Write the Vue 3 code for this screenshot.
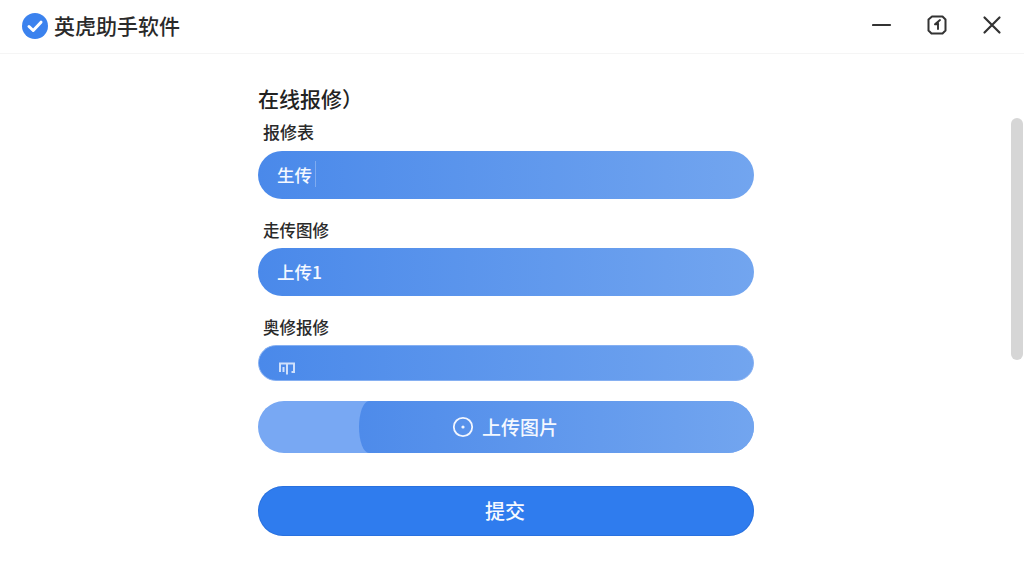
<template>
  <div class="window">
    <header class="titlebar">
      <div class="brand">
        <svg class="brand-icon" width="28" height="28" viewBox="0 0 28 28">
          <circle cx="14" cy="14" r="13" fill="#3b82ee" />
          <path d="M8 14.500l4.200 4L20 10.200" fill="none" stroke="#fff" stroke-width="3" stroke-linecap="round" stroke-linejoin="round" />
        </svg>
        <span class="brand-name">英虎助手软件</span>
      </div>
      <div class="win-controls">
        <button class="win-btn" aria-label="最小化">
          <svg width="20" height="20" viewBox="0 0 20 20">
            <path d="M1 10h17" stroke="#333" stroke-width="2.200" stroke-linecap="round" />
          </svg>
        </button>
        <button class="win-btn" aria-label="最大化">
          <svg width="20" height="20" viewBox="0 0 20 20" fill="none">
            <path d="M5 1.500h10.500l3 3v11l-3 3h-11l-3-3v-11z" stroke="#333" stroke-width="2" stroke-linejoin="round" />
            <path d="M13 5L8 9.300h3.200M11 7.500v6.500" stroke="#333" stroke-width="1.900" stroke-linecap="round" stroke-linejoin="round" />
          </svg>
        </button>
        <button class="win-btn" aria-label="关闭">
          <svg width="20" height="20" viewBox="0 0 20 20">
            <path d="M2.500 2.500l15 15M17.500 2.500l-15 15" stroke="#333" stroke-width="2.200" stroke-linecap="round" />
          </svg>
        </button>
      </div>
    </header>

    <main class="content">
      <form class="repair-form" @submit.prevent>
        <h1 class="form-title">在线报修）</h1>

        <label class="field-label first">报修表</label>
        <div class="field">
          <span>生传</span><i class="caret"></i>
        </div>

        <label class="field-label">走传图修</label>
        <div class="field">
          <span>上传1</span>
        </div>

        <label class="field-label">奥修报修</label>
        <div class="field small">
          <svg class="field-icon" width="18" height="14" viewBox="0 0 18 14" fill="none">
            <path d="M2 11V2.500h14V11h-2.500M9 2.500V13.500M5.500 6v5" stroke="#cfe0fb" stroke-width="2" />
          </svg>
        </div>

        <button type="button" class="upload-btn">
          <span class="upload-fill"></span>
          <svg class="upload-icon" width="22" height="22" viewBox="0 0 22 22" fill="none">
            <circle cx="11" cy="11" r="9.200" stroke="#f2f6fe" stroke-width="1.800" />
            <circle cx="11" cy="11" r="1.600" fill="#f2f6fe" />
          </svg>
          <span class="upload-text">上传图片</span>
        </button>

        <button type="submit" class="submit-btn">提交</button>
      </form>
    </main>

    <div class="scroll-thumb"></div>
  </div>
</template>

<script setup>
</script>

<style scoped>
.window {
  position: relative;
  width: 1024px;
  height: 576px;
  overflow: hidden;
  background: #fff;
  font-family: "Noto Sans CJK SC", "Noto Sans", sans-serif;
  color: #222;
}

.titlebar {
  display: flex;
  justify-content: space-between;
  align-items: center;
  height: 54px;
  box-sizing: border-box;
  padding: 0 22px 2px 21px;
  border-bottom: 1px solid #f5f5f5;
}

.brand {
  display: flex;
  align-items: center;
  gap: 5px;
}

.brand-name {
  margin-top: -2px;
  font-size: 21px;
  font-weight: 500;
  line-height: 28px;
  color: #2a2a2a;
}

.win-controls {
  display: flex;
  gap: 35px;
  margin-top: -1px;
}

.win-btn {
  display: flex;
  width: 20px;
  height: 20px;
  padding: 0;
  border: none;
  background: none;
}

.content {
  display: flex;
  justify-content: center;
  padding-right: 12px;
}

.repair-form {
  display: flex;
  flex-direction: column;
  width: 496px;
  padding-top: 28px;
}

.form-title {
  margin: 0;
  font-size: 21px;
  font-weight: 500;
  line-height: 32px;
  color: #222;
}

.field-label {
  margin: 20px 0 7px 5px;
  font-size: 16.500px;
  font-weight: 500;
  line-height: 22px;
  color: #2a2a2a;
}

.field-label.first {
  margin-top: 7px;
  margin-bottom: 8px;
  font-size: 17px;
}

.field {
  display: flex;
  align-items: center;
  height: 48px;
  box-sizing: border-box;
  padding: 0 18px 2px 19px;
  border-radius: 24px;
  background: linear-gradient(90deg, #4a89ea, #72a5ef);
  font-size: 17.500px;
  font-weight: 500;
  color: #f4f8ff;
}

.caret {
  width: 1px;
  height: 26px;
  margin-left: 3px;
  background: #7fabf0;
}

.field.small {
  height: 36px;
  padding-bottom: 0;
  border-radius: 18px;
  border: 1px solid #86b0f2;
}

.field-icon {
  margin-top: 10px;
}

.upload-btn {
  position: relative;
  display: flex;
  justify-content: center;
  align-items: center;
  gap: 8px;
  height: 52px;
  margin-top: 20px;
  padding: 0 2px 0 0;
  border: none;
  border-radius: 26px;
  overflow: hidden;
  background: #78a8f3;
  font-family: inherit;
  color: #f4f8ff;
}

.upload-fill {
  position: absolute;
  top: 0;
  right: 0;
  bottom: 0;
  left: 101px;
  border-radius: 10px 0 0 10px / 26px 0 0 26px;
  background: linear-gradient(90deg, #4e8bea, #72a5ef);
}

.upload-icon,
.upload-text {
  position: relative;
}

.upload-text {
  font-size: 19px;
  font-weight: 500;
  line-height: 26px;
}

.submit-btn {
  height: 50px;
  margin-top: 33px;
  padding: 0 2px 2px 0;
  border: none;
  border-radius: 25px;
  background: #2f7cee;
  box-shadow: inset 0 0 0 1px rgba(30, 90, 190, 0.3);
  font-family: inherit;
  font-size: 20px;
  font-weight: 500;
  color: #f6f9ff;
}

.scroll-thumb {
  position: absolute;
  top: 118px;
  left: 1011px;
  width: 12px;
  height: 242px;
  border-radius: 6px;
  background: #d6d6d6;
}
</style>
